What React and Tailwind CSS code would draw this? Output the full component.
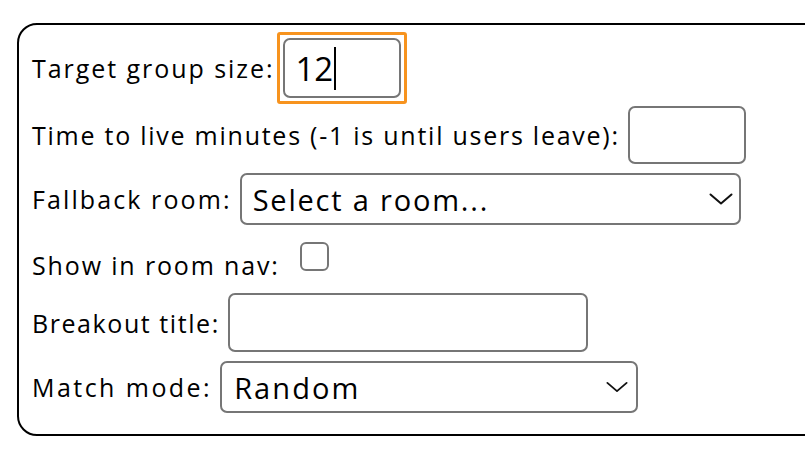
import React from "react";

const font = { fontFamily: "'Open Sans', 'Noto Sans', sans-serif" };

function Chevron({ className }) {
  return (
    <svg className={className} viewBox="0 0 24 12" fill="none" stroke="#111" strokeWidth="2" strokeLinecap="round" strokeLinejoin="round">
      <path d="M1.5 1.5 L12 10.5 L22.5 1.5" />
    </svg>
  );
}

function Label({ children, className = "tracking-[1.9px]" }) {
  return <span className={`text-[25px] leading-[30px] text-black whitespace-nowrap ${className}`}>{children}</span>;
}

export default function App() {
  return (
    <div className="w-[805px] h-[459px] overflow-hidden bg-white" style={font}>
      <div className="ml-[17px] mt-[23px] w-[820px] h-[413px] border-2 border-black rounded-[20px] pl-[13px] pt-[13px] flex flex-col">
        {/* Row 1 */}
        <div className="flex items-center h-[60px]">
          <Label className="tracking-[1.95px]">Target group size:</Label>
          <div className="ml-[2px] -my-[7px] p-[3px] border-[3px] border-[#f7931e] rounded-[3px]">
            <div className="w-[118px] h-[60px] border-2 border-[#767676] rounded-[7px] flex items-center pl-[11px]">
              <span className="text-[33px] leading-none text-black">12</span>
              <span className="w-[1.5px] h-[43px] bg-black ml-[1px]"></span>
            </div>
          </div>
        </div>
        {/* Row 2 */}
        <div className="flex items-center h-[58px] mt-[8px]">
          <Label className="tracking-[1.75px]">Time to live minutes (-1 is until users leave):</Label>
          <div className="ml-[8px] w-[118px] h-[58px] border-2 border-[#767676] rounded-[7px]"></div>
        </div>
        {/* Row 3 */}
        <div className="flex items-center h-[52px] mt-[9px]">
          <Label className="tracking-[2.1px]">Fallback room:</Label>
          <div className="ml-[8px] w-[501px] h-[52px] border-2 border-[#767676] rounded-[7px] flex items-center justify-between pl-[11px] pr-[6px]">
            <span className="text-[29px] leading-none tracking-[1.8px] text-black">Select a room...</span>
            <Chevron className="w-[24px] h-[12px]" />
          </div>
        </div>
        {/* Row 4 */}
        <div className="flex items-start h-[52px] mt-[8px]">
          <span className="mt-[17px]"><Label className="tracking-[1.85px]">Show in room nav:</Label></span>
          <div className="ml-[20px] mt-[9px] w-[29px] h-[29px] border-2 border-[#767676] rounded-[6px]"></div>
        </div>
        {/* Row 5 */}
        <div className="flex items-center h-[59px] mt-[8px]">
          <Label className="tracking-[1.57px]">Breakout title:</Label>
          <div className="ml-[8px] w-[360px] h-[59px] border-2 border-[#767676] rounded-[7px]"></div>
        </div>
        {/* Row 6 */}
        <div className="flex items-center h-[52px] mt-[9px]">
          <Label className="tracking-[2.45px]">Match mode:</Label>
          <div className="ml-[8px] w-[418px] h-[52px] border-2 border-[#767676] rounded-[7px] flex items-center justify-between pl-[12px] pr-[8px]">
            <span className="text-[29px] leading-none tracking-[2.1px] text-black">Random</span>
            <Chevron className="w-[22px] h-[12px]" />
          </div>
        </div>
      </div>
    </div>
  );
}
